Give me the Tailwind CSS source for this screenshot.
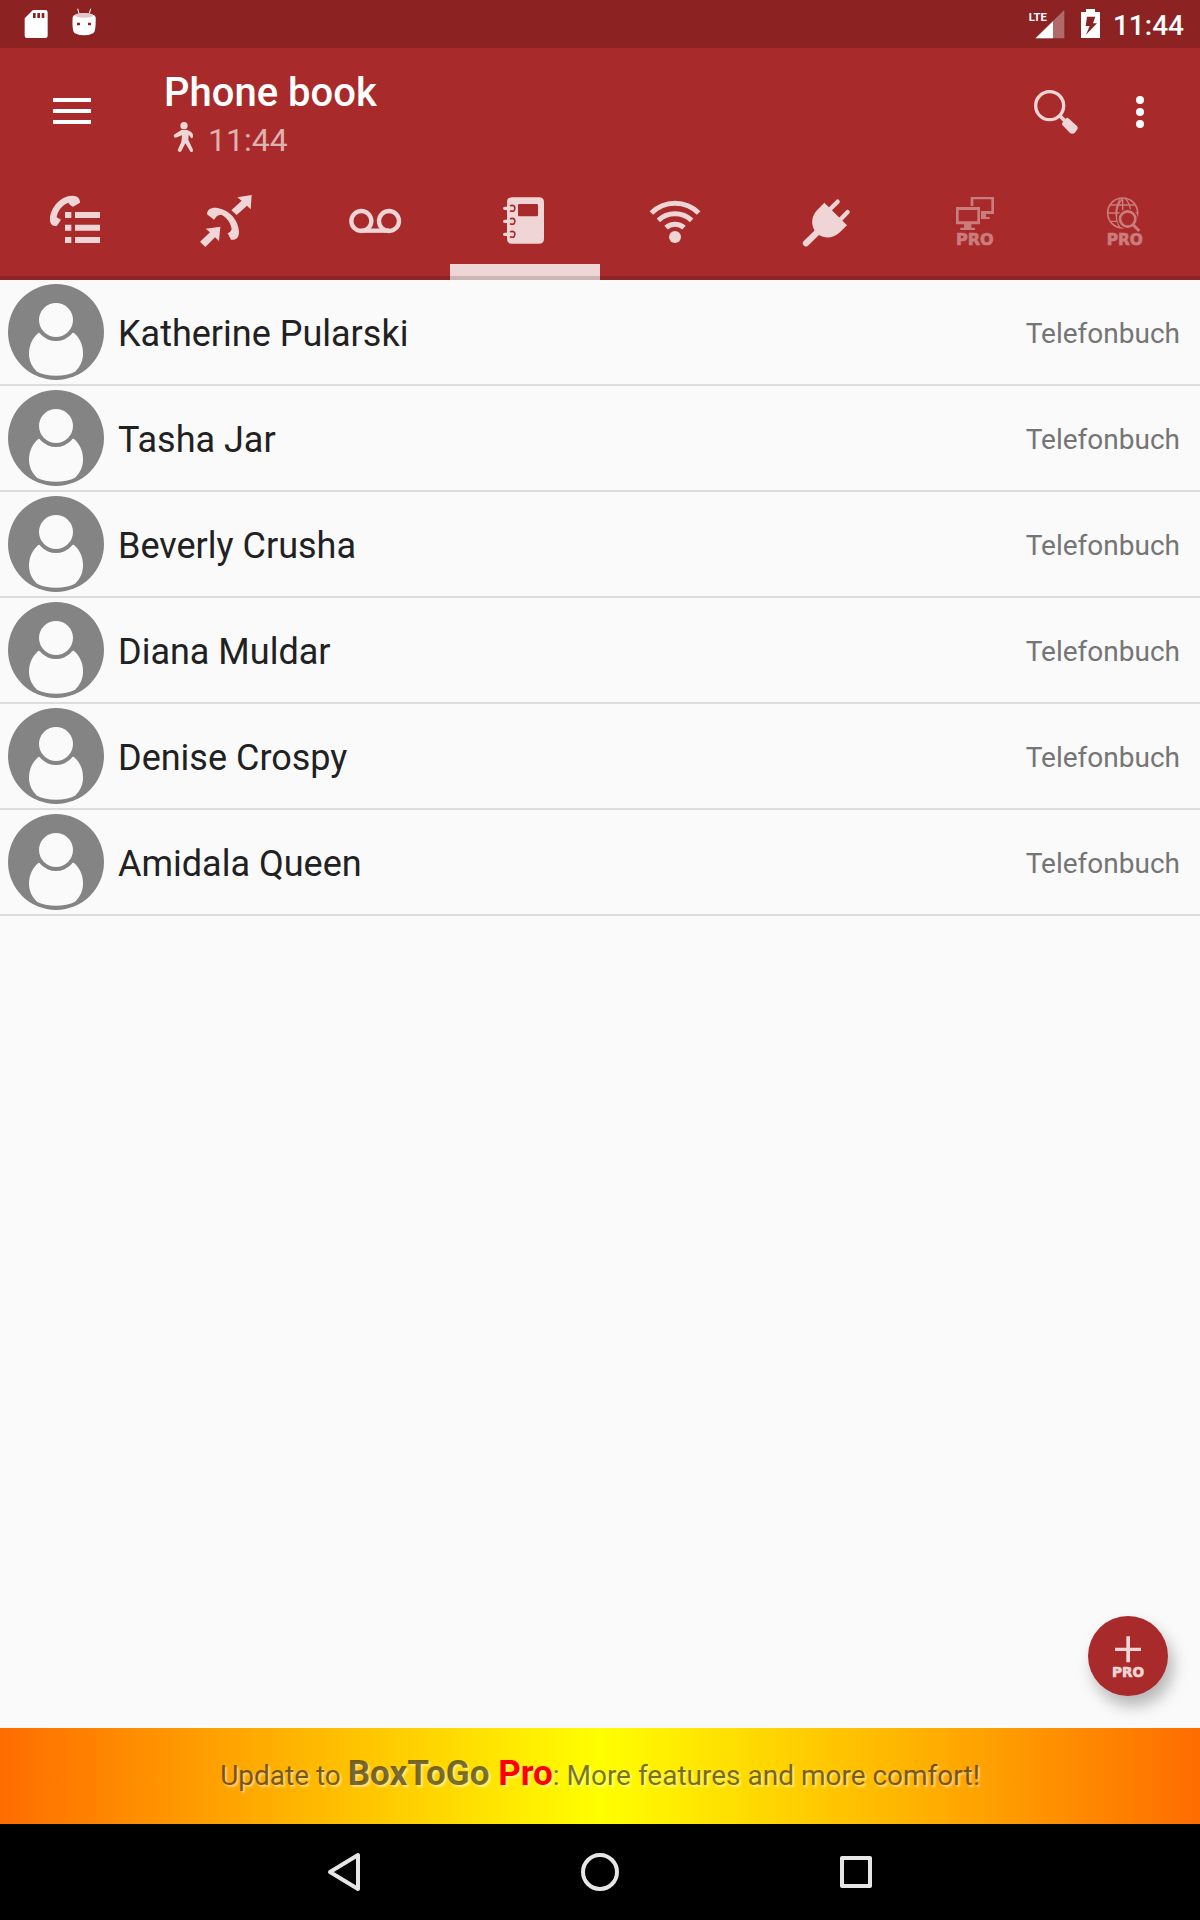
<!DOCTYPE html>
<html lang="en">
<head>
  <meta charset="UTF-8" />
  <meta name="viewport" content="width=device-width, initial-scale=1" />
  <title>Phone book</title>
  <script src="https://cdn.jsdelivr.net/npm/@tailwindcss/browser@4"></script>
</head>
<body class="min-h-screen flex flex-col bg-[#fafafa] font-[Roboto,sans-serif]">

  <!-- Status bar -->
  <div class="h-12 shrink-0 bg-[#8c2222] flex items-center justify-between pl-6 pr-4 text-white">
    <div class="flex items-center gap-6">
      <svg class="w-6 h-8" viewBox="72 24 72 96" fill="#fff">
        <path fill-rule="evenodd" d="M99 30H136Q143 30 143 37V107Q143 114 136 114H81Q74 114 74 107V55ZM99 39V54H107V39ZM112 39V54H120V39ZM125 39V54H133V39Z" />
      </svg>
      <svg class="w-6 h-8" viewBox="216 24 72 96" fill="#fff">
        <path d="M233 26L237 41M272 26L268 41" stroke="#fff" stroke-width="3" />
        <path fill-rule="evenodd" d="M218 52Q220 41 252 40Q285 41 287 52Q288 78 284 94Q280 105 252 106Q224 105 220 94Q216 78 218 52ZM231 68V76H240V68ZM264 68V76H273V68Z" />
        <ellipse cx="252" cy="46" rx="28" ry="7" fill="#e3c6c6" />
      </svg>
    </div>
    <div class="flex items-center">
      <svg class="w-9 h-8" viewBox="204 24 108 96">
        <path d="M310 30V115H222Z" fill="#b06a6a" />
        <path d="M276 64V115H224Z" fill="#fff" />
        <text x="203" y="62" font-size="34" font-weight="700" fill="#fff">LTE</text>
      </svg>
      <svg class="w-6 h-8 ml-3.5" viewBox="354 24 72 96">
        <path fill="#fff" fill-rule="evenodd" d="M375 27H402V36H417V114H360V36H375ZM378 50L374 78H386L375 104L408 70H396L403 50Z" />
      </svg>
      <span class="ml-2.5 text-[28px] leading-8 font-medium pt-1">11:44</span>
    </div>
  </div>

  <header class="relative shrink-0 bg-[#a92a2a]">
    <!-- Toolbar -->
    <div class="h-32 flex items-start">
      <button class="w-36 h-32 flex items-center justify-center" aria-label="Menu">
        <svg class="w-[38px] h-7" viewBox="0 0 38 28" fill="#fff"><path d="M0 0H38V4H0ZM0 11H38V15H0ZM0 22H38V26H0Z" /></svg>
      </button>
      <div class="flex-1 pl-5 pt-[21px]">
        <h1 class="text-[40px] leading-12 font-medium text-white">Phone book</h1>
        <div class="mt-[3px] ml-2 flex items-start gap-3">
          <svg class="w-6 h-8" viewBox="513 361 72 96" fill="#efd5d5">
            <circle cx="549" cy="378" r="11" />
            <path d="M541 391H559Q573 396 576 405V413Q571 420 568 411L563 405L562 420L576 450Q577 459 569 457L553 431L541 455Q534 460 530 452L541 426L543 407L524 414Q516 414 519 405Z" />
          </svg>
          <span class="text-[32px] leading-10 text-[#deb2b2]">11:44</span>
        </div>
      </div>
      <div class="h-32 flex items-center pr-6">
        <button class="size-24 flex items-center justify-center" aria-label="Search">
          <svg class="size-12" viewBox="216 264 144 144" fill="none" stroke="#efd5d5">
            <circle cx="269" cy="317" r="42" stroke-width="10" />
            <path d="M299 347L314 362" stroke-width="11" />
            <path d="M309 366L319 354Q323 352 327 356L351 378Q356 384 350 391L344 399Q337 404 330 399L307 375Q304 371 309 366Z" fill="#efd5d5" stroke="none" />
          </svg>
        </button>
        <button class="w-18 h-24 flex items-center justify-center" aria-label="More options">
          <svg class="w-2 h-8" viewBox="0 0 8 32" fill="#fff"><circle cx="4" cy="4" r="4" /><circle cx="4" cy="16" r="4" /><circle cx="4" cy="28" r="4" /></svg>
        </button>
      </div>
    </div>

    <!-- Tabs -->
    <nav class="grid grid-cols-8">
      <button class="h-26 pt-4.5 flex flex-col items-center" aria-label="Call list">
        <svg class="size-14" viewBox="141 72 168 168" fill="#efd5d5">
          <path d="M150 148C150 112 184 77 216 77C232 76 241 86 240 98L219 110Q209 106 205 98C187 104 172 124 170 142L183 149L171 167C157 171 150 162 150 148Z" />
          <path d="M195 126H214V144H195ZM225 126H300V144H225ZM195 164H214V182H195ZM225 164H300V182H225ZM195 201H214V219H195ZM225 201H300V219H225Z" />
        </svg>
      </button>
      <button class="h-26 pt-4.5 flex flex-col items-center" aria-label="Call through">
        <svg class="size-14" viewBox="591 72 168 168" fill="#efd5d5">
          <path d="M621 133C621 117 636 111 653 114C690 120 716 152 717 186C717 203 708 211 693 209L683 190Q693 186 695 178C693 160 682 144 664 134Q655 135 650 139L642 149Z" />
          <path d="M755 75L752 118L741 107L710 135L694 121L725 92L712 82ZM661 170L657 213L645 202L616 231L600 215L630 187L617 176Z" />
        </svg>
      </button>
      <button class="h-26 pt-4.5 flex flex-col items-center" aria-label="Voicemail">
        <svg class="size-14" viewBox="141 72 168 168" fill="none" stroke="#efd5d5" stroke-width="13">
          <circle cx="184" cy="153" r="30" /><circle cx="267" cy="153" r="30" /><path d="M184 182H267" />
        </svg>
      </button>
      <button class="h-26 pt-4.5 flex flex-col items-center" aria-label="Phone book" aria-current="page">
        <svg class="size-14" viewBox="591 72 168 168">
          <path fill="#efd5d5" fill-rule="evenodd" d="M636 82H717Q732 82 732 97V206Q732 221 717 221H636Q621 221 621 206V97Q621 82 636 82ZM658 102Q654 102 654 106V135Q654 139 658 139H710Q714 139 714 135V106Q714 102 710 102Z" />
          <path fill="none" stroke="#a92a2a" stroke-width="5" d="M630 108Q638 104 643 109Q647 115 643 121Q638 126 630 122M630 147Q638 143 643 148Q647 154 643 160Q638 165 630 161M630 186Q638 182 643 187Q647 193 643 199Q638 204 630 200" />
          <path stroke="#efd5d5" stroke-width="10" stroke-linecap="round" d="M614 115H634M614 154H634M614 193H634" />
        </svg>
        <span class="mt-3.5 w-full h-4 bg-[#efd5d5]"></span>
      </button>
      <button class="h-26 pt-4.5 flex flex-col items-center" aria-label="Wi-Fi">
        <svg class="size-14" viewBox="141 72 168 168" fill="none" stroke="#efd5d5" stroke-width="15">
          <path d="M154 129A100 100 0 0 1 296 129M175 151A73 73 0 0 1 275 151M198 173A40 40 0 0 1 252 173" />
          <circle cx="225" cy="201" r="18" fill="#efd5d5" stroke="none" />
        </svg>
      </button>
      <button class="h-26 pt-4.5 flex flex-col items-center" aria-label="Power">
        <svg class="size-14" viewBox="591 72 168 168" stroke="#efd5d5" stroke-linecap="round">
          <path fill="#efd5d5" stroke="none" d="M673 98L741 166L718 188C700 205 675 206 657 195L643 181C632 160 635 138 651 121Z" />
          <path stroke-width="19" d="M618 220L655 184" />
          <path stroke-width="13" d="M690 118L713 95M720 150L743 126" />
        </svg>
      </button>
      <button class="h-26 pt-4.5 flex flex-col items-center" aria-label="Remote devices">
        <svg class="size-14" viewBox="141 72 168 168" fill="#cb7c7c">
          <path fill-rule="evenodd" d="M168 111H240V163H214V173H225V180H181V173H192V163H168ZM176 120V154H232V120Z" />
          <path d="M212 108V81H282V132H258V141H269V147H243V123H274V88H220V108Z" />
          <text x="168" y="224" font-size="48" font-weight="700" stroke="#cb7c7c" stroke-width="2" class="font-['DejaVu_Sans']">PRO</text>
        </svg>
      </button>
      <button class="h-26 pt-4.5 flex flex-col items-center" aria-label="Web search">
        <svg class="size-14" viewBox="591 72 168 168" fill="none" stroke="#cb7c7c" stroke-width="5">
          <circle cx="668" cy="129" r="45" />
          <path d="M632 105H704M624 129H712M632 154H680M668 84V124M662 84Q635 126 660 174M674 84Q690 98 692 124M668 86Q646 105 650 154" stroke-width="4" />
          <circle cx="683" cy="147" r="31" fill="#a92a2a" stroke="none" />
          <path d="M700 176L716 160L724 184Z" fill="#a92a2a" stroke="none" />
          <circle cx="683" cy="147" r="23" stroke-width="8" />
          <path d="M699 164L718 183" stroke-width="9" />
          <text x="620" y="224" font-size="46" font-weight="700" fill="#cb7c7c" stroke-width="2" class="font-['DejaVu_Sans']">PRO</text>
        </svg>
      </button>
    </nav>
    <div class="absolute inset-x-0 bottom-0 h-1 bg-black/15"></div>
  </header>

  <main class="relative flex-1">
    <ul id="contacts">
      <!-- JS will insert contacts here -->
    </ul>

    <button class="absolute right-8 bottom-8 size-20 rounded-full bg-[#a92a2a] shadow-[5px_10px_16px_rgba(0,0,0,0.28)]" aria-label="Add contact">
      <svg class="size-20" viewBox="144 108 240 240" fill="#efd5d5">
        <path d="M259 169H270V203H303V213H270V247H259V213H225V203H259Z" />
        <text x="216" y="290" font-size="41" font-weight="700" stroke="#efd5d5" stroke-width="2" class="font-['DejaVu_Sans']">PRO</text>
      </svg>
    </button>
  </main>

  <!-- Upgrade banner -->
  <a href="#" class="h-24 shrink-0 flex items-center justify-center pb-0.5 bg-linear-to-r/srgb from-[#ff6c00] via-[#ffff00] to-[#ff6c00] text-[28px] leading-10 text-black/55 text-shadow-[2px_2px_2px_rgba(255,255,255,0.5)]">
    <span>Update to <b class="text-[35px]">BoxToGo <span class="text-[#ff0000]">Pro</span></b>: More features and more comfort!</span>
  </a>

  <!-- Navigation bar -->
  <nav class="h-24 shrink-0 bg-black flex items-center justify-center">
    <button class="w-64 h-24 flex items-center justify-center" aria-label="Back">
      <svg class="size-10" viewBox="0 0 40 40" fill="none" stroke="#e6e6e6" stroke-width="4" stroke-linejoin="round"><path d="M34 3V37L6 20Z" /></svg>
    </button>
    <button class="w-64 h-24 flex items-center justify-center" aria-label="Home">
      <svg class="size-10" viewBox="0 0 40 40" fill="none" stroke="#e6e6e6" stroke-width="4"><circle cx="20" cy="20" r="17" /></svg>
    </button>
    <button class="w-64 h-24 flex items-center justify-center" aria-label="Recent apps">
      <svg class="size-10" viewBox="0 0 40 40" fill="none" stroke="#e6e6e6" stroke-width="4" stroke-linejoin="round"><path d="M6 6H34V34H6Z" /></svg>
    </button>
  </nav>

  <script>
    const contacts = [
      ["Katherine Pularski", "Telefonbuch"],
      ["Tasha Jar", "Telefonbuch"],
      ["Beverly Crusha", "Telefonbuch"],
      ["Diana Muldar", "Telefonbuch"],
      ["Denise Crospy", "Telefonbuch"],
      ["Amidala Queen", "Telefonbuch"]
    ];

    function renderContacts(data) {
      const list = document.getElementById("contacts");
      list.innerHTML = data.map(([name, source]) => `
        <li class="flex items-center py-1 pl-2 pr-5 border-b-2 border-[#dcdcdc]">
          <svg class="size-24 shrink-0" viewBox="24 42 288 288">
            <circle cx="168" cy="186" r="144" fill="#848484" />
            <path fill="#fafafa" d="M116 188H221C240 204 249 226 249 250C249 274 240 291 225 305C196 321 140 321 111 305C96 291 87 274 87 250C87 226 97 204 116 188Z" />
            <circle cx="168" cy="150" r="63" fill="#848484" />
            <circle cx="168" cy="150" r="51" fill="#fafafa" />
          </svg>
          <span class="ml-3.5 pt-1 flex-1 text-[36px] leading-12 text-[#212121]">${name}</span>
          <span class="pt-1 text-[28px] leading-10 text-[#757575]">${source}</span>
        </li>`).join("");
    }

    renderContacts(contacts);
  </script>
</body>
</html>
